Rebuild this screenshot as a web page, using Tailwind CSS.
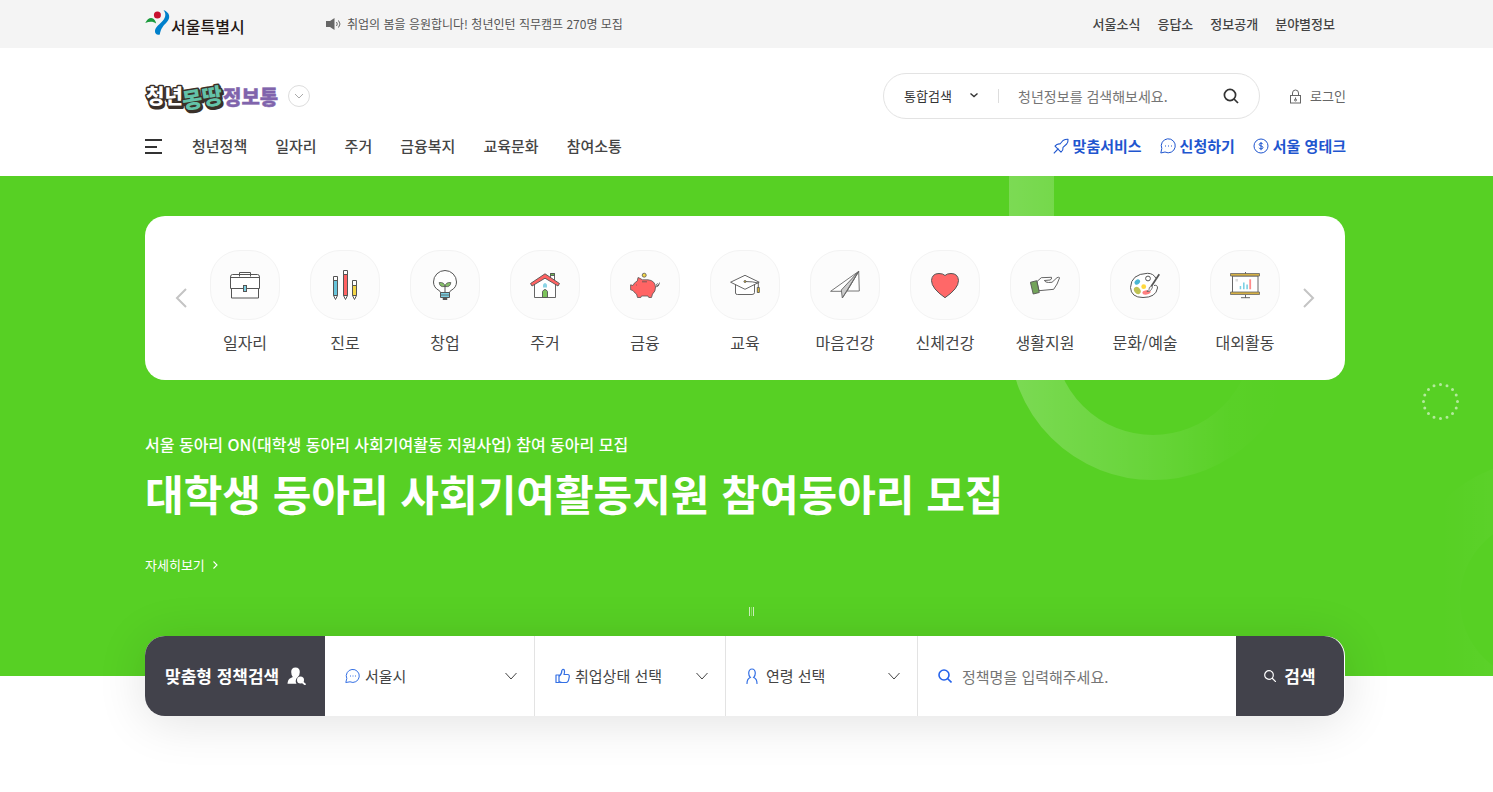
<!DOCTYPE html>
<html lang="ko">
<head>
    <meta charset="UTF-8">
    <meta name="viewport" content="width=device-width, initial-scale=1.0">
    <title>청년몽땅정보통</title>
    <script src="https://cdn.jsdelivr.net/npm/@tailwindcss/browser@4"></script>
</head>
<body class="bg-white font-['Noto_Sans_CJK_KR',sans-serif] text-[#444]">

    <!-- Top bar -->
    <div class="bg-[#f4f4f4]">
        <div class="mx-auto flex h-12 max-w-[1203px] items-center pr-[13px]">
            <a href="#" class="flex w-[180px] items-start text-[16px] font-medium text-[#231815]">
                <svg class="h-[27px] w-[26px]" viewBox="0 0 26 27" aria-hidden="true">
                    <path d="M0.300 13C2.500 8 7 6 9.800 10.200C10.700 11.500 11 12.500 11.100 13.500C8.300 11.300 4.600 11.300 0.300 13Z" fill="#1a9a3c"/>
                    <circle cx="12.400" cy="5" r="3.500" fill="#c8102e"/>
                    <path d="M18.500 0C25 2.500 26 8 21.500 12.500C18.500 15.500 15.800 18.500 14.800 24.500C12 25.500 9.500 23.500 10 20.500C10.800 16.500 15 14 18 10.500C21 7 21 3 18.500 0Z" fill="#0080cb"/>
                </svg>
                <span class="pt-1">서울특별시</span>
            </a>
            <a href="#" class="flex items-center gap-1 text-[12px] text-[#555]">
                <svg class="h-4 w-[18px]" viewBox="0 0 18 16" fill="none" aria-hidden="true">
                    <path d="M1 5h4l4.500-3v12L5 11H1Z" fill="#666"/>
                    <path d="M11.500 6q1.600 2 0 4M13.500 4.500q3 3.500 0 7" stroke="#666"/>
                </svg>
                취업의 봄을 응원합니다! 청년인턴 직무캠프 270명 모집
            </a>
            <nav class="ml-auto flex gap-[17px] text-[13px] font-medium" aria-label="서울시 바로가기">
                <a href="#">서울소식</a>
                <a href="#">응답소</a>
                <a href="#">정보공개</a>
                <a href="#">분야별정보</a>
            </nav>
        </div>
    </div>

    <!-- Header -->
    <header class="mx-auto max-w-[1203px] pt-[25px] pr-[2px] pb-[18px]">
        <div class="flex h-[46px] items-center">
            <a href="#" aria-label="청년몽땅정보통">
                <svg class="h-9 w-[135px] overflow-visible font-black" viewBox="0 0 135 36" stroke-linejoin="round">
                    <g font-size="20" fill="#fff" stroke="#3a3029" stroke-width="3" paint-order="stroke">
                        <text x="2" y="28" fill="#3a3029">청년</text>
                        <text x="1" y="26">청년</text>
                    </g>
                    <g font-size="22" fill="#63c2a8" stroke="#3a3029" stroke-width="3" paint-order="stroke" transform="rotate(-9 58 20)">
                        <text x="38" y="30" fill="#3a3029">몽땅</text>
                        <text x="37" y="28">몽땅</text>
                    </g>
                    <text x="78" y="27" font-size="20" fill="#8064ac" stroke="#8064ac" stroke-width=".4">정보통</text>
                </svg>
            </a>
            <button type="button" aria-label="관련 사이트 열기" class="ml-2 flex size-[22px] items-center justify-center rounded-full border border-[#ddd]">
                <svg class="size-3" viewBox="0 0 12 12" fill="none" stroke="#aaa" aria-hidden="true"><path d="M2 4l4 4 4-4"/></svg>
            </button>

            <form class="ml-auto flex h-[46px] w-[377px] items-center rounded-full border border-[#e3e3e3] pl-5">
                <div class="relative w-[94px]">
                    <select aria-label="검색 범위" class="block h-6 w-full appearance-none text-[13px] leading-6 text-[#333]">
                        <option>통합검색</option>
                    </select>
                    <svg class="pointer-events-none absolute top-[6px] right-[19px] size-[10px]" viewBox="0 0 10 10" fill="none" stroke="#333" stroke-width="1.400" aria-hidden="true"><path d="M1.500 3.500l3.500 3 3.500-3"/></svg>
                </div>
                <span class="h-[14px] w-px bg-[#ddd]"></span>
                <input aria-label="검색어" type="text" placeholder="청년정보를 검색해보세요." class="min-w-0 flex-1 pl-[19px] text-[14px] outline-none placeholder:text-[#757575]">
                <button type="submit" aria-label="검색" class="mr-5">
                    <svg class="size-4" viewBox="0 0 16 16" fill="none" stroke="#333" stroke-width="1.700" aria-hidden="true"><circle cx="7" cy="7" r="5.600"/><path d="M11 11l4 4"/></svg>
                </button>
            </form>
            <a href="#" class="ml-[29px] flex items-center gap-2 text-[13px] text-[#666]">
                <svg class="h-[15px] w-[13px]" viewBox="0 0 13 15" fill="none" stroke="#666" aria-hidden="true">
                    <rect x="1.500" y="6.500" width="10" height="7.500"/>
                    <path d="M3.500 6.500V4a3 3 0 0 1 6 0v2.500M6.500 8.500v2"/><circle cx="6.500" cy="11" r="1"/>
                </svg>
                로그인
            </a>
        </div>

        <div class="mt-[15px] flex h-6 items-center text-[15px] font-medium">
            <button type="button" aria-label="전체 메뉴" class="mr-[30px]">
                <svg class="h-[15px] w-[17px]" viewBox="0 0 17 15" stroke="#333" stroke-width="2" aria-hidden="true"><path d="M0 1h17M0 8h12M0 14h17"/></svg>
            </button>
            <nav class="flex gap-7" aria-label="주 메뉴">
                <a href="#">청년정책</a>
                <a href="#">일자리</a>
                <a href="#">주거</a>
                <a href="#">금융복지</a>
                <a href="#">교육문화</a>
                <a href="#">참여소통</a>
            </nav>
            <nav class="ml-auto flex gap-[18px] font-bold text-[#1f56cf]" aria-label="서비스">
                <a href="#" class="flex items-center gap-1">
                    <svg class="size-4" viewBox="0 0 16 16" fill="none" stroke="currentColor" stroke-width="1.100" stroke-linejoin="round" aria-hidden="true">
                        <path d="M.8 15.300L5.500 10.500M2 8.200Q4 5.500 7 6L10 2.500Q12.500 1 15 1.200Q15.300 3.800 13.700 6L10 9.300Q10.500 12 8 14.200Z"/>
                    </svg>
                    맞춤서비스
                </a>
                <a href="#" class="flex items-center gap-1">
                    <svg class="size-4" viewBox="0 0 16 16" fill="none" stroke="currentColor" aria-hidden="true">
                        <path d="M.8 15l1-4.500A7 7 0 1 1 5 14Z"/><path d="M5 8h1M8 8h1M11 8h1" stroke-width="1.200"/>
                    </svg>
                    신청하기
                </a>
                <a href="#" class="flex items-center gap-1">
                    <svg class="size-4" viewBox="0 0 16 16" fill="none" stroke="currentColor" aria-hidden="true">
                        <circle cx="8" cy="8" r="7"/><path d="M10 6.200Q9.500 5.200 8 5.200Q6.200 5.200 6.200 6.500Q6.200 7.700 8 8Q10 8.300 10 9.600Q10 10.900 8 10.900Q6.500 10.900 6 9.800M8 4v8.200"/>
                    </svg>
                    서울 영테크
                </a>
            </nav>
        </div>
    </header>

    <!-- Hero -->
    <main class="pb-20">
        <section class="relative bg-[#57d024] pt-10 pb-[59px]">
            <svg class="absolute top-0 right-0 h-[500px] w-[493px]" viewBox="0 0 493 500" fill="none" aria-hidden="true">
                <defs>
                    <linearGradient id="ring" gradientUnits="userSpaceOnUse" x1="9" y1="0" x2="285" y2="0">
                        <stop stop-color="#fff" stop-opacity=".22"/>
                        <stop offset=".5" stop-color="#fff" stop-opacity=".1"/>
                        <stop offset=".8" stop-color="#fff" stop-opacity=".015"/>
                        <stop offset="1" stop-color="#fff" stop-opacity="0"/>
                    </linearGradient>
                    <linearGradient id="edge" gradientUnits="userSpaceOnUse" x1="440" y1="0" x2="493" y2="0">
                        <stop stop-color="#fff" stop-opacity="0"/><stop offset="1" stop-color="#fff" stop-opacity=".025"/>
                    </linearGradient>
                </defs>
                <path d="M31.500 0V160A121.500 121.500 0 0 0 274.500 160" stroke="url(#ring)" stroke-width="45"/>
                <circle cx="542" cy="424" r="111" stroke="url(#edge)" stroke-width="58"/>
                <circle cx="440.500" cy="225.500" r="17" stroke="#fff" stroke-opacity=".55" stroke-width="3" stroke-linecap="round" pathLength="16" stroke-dasharray="0 1"/>
            </svg>

            <div class="relative mx-auto max-w-[1203px] pr-[3px]">
                <div class="flex items-center rounded-[20px] bg-white">
                    <button type="button" aria-label="이전" class="flex w-[50px] justify-end pr-2">
                        <svg class="h-5 w-3" viewBox="0 0 12 20" fill="none" stroke="#c4c4c4" stroke-width="2" aria-hidden="true"><path d="M11 1L2 10l9 9"/></svg>
                    </button>
                    <ul class="flex flex-1 justify-between pt-[34px] pb-[26px] text-[16px] leading-6 text-[#444]">
                        <li class="w-[100px]"><a href="#" class="flex flex-col items-center gap-[10px]">
                            <span class="flex size-[70px] items-center justify-center rounded-[30px] border border-[#f3f3f3] bg-[#fcfcfc]">
                                <svg class="size-[30px]" viewBox="0 0 30 30" fill="#fff" stroke="#555" aria-hidden="true">
                                    <path d="M9.500 6.500v-4h11v4M.500 18.500V7q0-2.500 2-2.500h25q2 0 2 2.500v11.500ZM1.500 18.500v9.500h27v-9.500M.500 7.500h29"/>
                                    <rect x="13.500" y="15.500" width="3" height="6" fill="#7ccfe2"/>
                                </svg>
                            </span>일자리</a></li>
                        <li class="w-[100px]"><a href="#" class="flex flex-col items-center gap-[10px]">
                            <span class="flex size-[70px] items-center justify-center rounded-[30px] border border-[#f3f3f3] bg-[#fcfcfc]">
                                <svg class="size-[30px]" viewBox="0 0 30 30" fill="#fff" stroke="#555" aria-hidden="true">
                                    <path d="M3.500 6.500h4v19l-2 4-2-4ZM13.500.500h4v25l-2 4-2-4ZM22.500 10.500h4v15l-2 4-2-4Z"/>
                                    <path d="M3.500 10.500h4v15h-4Z" fill="#67c4da"/>
                                    <path d="M13.500 4.500h4v21h-4Z" fill="#ff6262"/>
                                    <path d="M22.500 15.500h4v10h-4Z" fill="#f3d646"/>
                                </svg>
                            </span>진로</a></li>
                        <li class="w-[100px]"><a href="#" class="flex flex-col items-center gap-[10px]">
                            <span class="flex size-[70px] items-center justify-center rounded-[30px] border border-[#f3f3f3] bg-[#fcfcfc]">
                                <svg class="size-[30px]" viewBox="0 0 30 30" fill="#fff" stroke="#555" aria-hidden="true">
                                    <path d="M10.500 22.500Q10.500 21.500 9 20.500Q3.500 17.500 3.500 12a11.500 11.500 0 0 1 23 0Q26.500 17.500 21 20.500Q19.500 21.500 19.500 22.500Z"/>
                                    <path d="M15 22v-6"/>
                                    <path d="M15 16.500Q9.500 17.500 9.200 12.500Q14.500 12 15 16.500Q15.500 12 20.800 12.500Q20.500 17.500 15 16.500Z" fill="#86bf6a" stroke-width=".8"/>
                                    <path d="M13 28.500h4v1h-4Z"/><path d="M10.500 22.500h9v5h-9Z" fill="#7ccfe2"/><path d="M10.500 25h9" stroke-width=".8"/>
                                </svg>
                            </span>창업</a></li>
                        <li class="w-[100px]"><a href="#" class="flex flex-col items-center gap-[10px]">
                            <span class="flex size-[70px] items-center justify-center rounded-[30px] border border-[#f3f3f3] bg-[#fcfcfc]">
                                <svg class="size-[30px]" viewBox="0 0 30 30" fill="#fff" stroke="#555" stroke-width=".9" aria-hidden="true">
                                    <path d="M20.500 3.500h4v8h-4Z"/><path d="M20.500 3.500h4v2h-4Z" fill="#6db954"/>
                                    <path d="M4.500 13L15 6l10.500 7v14.500h-21Z"/>
                                    <path d="M15 3.800L29.500 13.500L28 16L15 8.200L2 16L.500 13.500Z" fill="#ff6262"/>
                                    <path d="M13 17.500v-3q2-3 4 0v3Z" fill="#8bd5e6" stroke="none"/>
                                    <path d="M12.500 27.500v-6q2.500-4 5 0v6Z" fill="#7cc35b"/>
                                </svg>
                            </span>주거</a></li>
                        <li class="w-[100px]"><a href="#" class="flex flex-col items-center gap-[10px]">
                            <span class="flex size-[70px] items-center justify-center rounded-[30px] border border-[#f3f3f3] bg-[#fcfcfc]">
                                <svg class="size-[30px]" viewBox="0 0 30 30" fill="none" stroke="#555" stroke-width=".8" stroke-linejoin="round" aria-hidden="true">
                                    <circle cx="14.200" cy="5.200" r="2" fill="#f3d646"/>
                                    <path d="M8 7.500L7.300 11Q4 12.500 3 15.500L.600 14.800V19.800L3 20.500Q4.500 23 6.500 24L7.500 27.500H10.800L11.500 26H18L18.800 27.500H21.500L22.500 24Q25.700 21.500 25.500 17Q25 10.500 18 9.800H12.500Q9.500 8 8 7.500Z" fill="#ff6464"/>
                                    <path d="M12 11.800h5M6 15h.8"/>
                                    <path d="M25.500 17Q29 16.500 28.500 14.500Q27.500 13 26.500 14.300Q26.200 16.800 28.500 15.500L29.700 12.500"/>
                                </svg>
                            </span>금융</a></li>
                        <li class="w-[100px]"><a href="#" class="flex flex-col items-center gap-[10px]">
                            <span class="flex size-[70px] items-center justify-center rounded-[30px] border border-[#f3f3f3] bg-[#fcfcfc]">
                                <svg class="size-[30px]" viewBox="0 0 30 30" fill="#fff" stroke="#555" stroke-width=".9" aria-hidden="true">
                                    <path d="M5.500 14v9q0 1.500 2 1.500h14.500q2.500 0 2.500-2V14"/>
                                    <path d="M15 5.300L29.200 12.200L15 19.300L.600 12.200Z"/>
                                    <path d="M15 11.500Q23 11.500 28.300 13v5" fill="none"/>
                                    <circle cx="15" cy="11.500" r="1" fill="#f3c832"/><path d="M27.300 17.500h2v5h-2Z" fill="#f3c832"/>
                                </svg>
                            </span>교육</a></li>
                        <li class="w-[100px]"><a href="#" class="flex flex-col items-center gap-[10px]">
                            <span class="flex size-[70px] items-center justify-center rounded-[30px] border border-[#f3f3f3] bg-[#fcfcfc]">
                                <svg class="size-[30px]" viewBox="0 0 30 30" fill="#fff" stroke="#666" stroke-width=".9" stroke-linejoin="round" aria-hidden="true">
                                    <path d="M28.700 1.300L.600 21.300H11.500ZM28.700 1.300L29.300 21H17Z"/>
                                    <path d="M28.700 1.300L11.300 20L12.300 28L17 21Z" fill="#ccc"/><path d="M28.700 1.300L12.300 28"/>
                                </svg>
                            </span>마음건강</a></li>
                        <li class="w-[100px]"><a href="#" class="flex flex-col items-center gap-[10px]">
                            <span class="flex size-[70px] items-center justify-center rounded-[30px] border border-[#f3f3f3] bg-[#fcfcfc]">
                                <svg class="size-[30px]" viewBox="0 0 30 30" aria-hidden="true">
                                    <path d="M15 27.700Q1.500 18.500 1.500 10.500Q2 3.500 9 3.500Q13 3.500 15 5.500Q17 3.500 21 3.500Q28 3.500 28.500 10.500Q28.500 18.500 15 27.700Z" fill="#ff6868" stroke="#555"/>
                                </svg>
                            </span>신체건강</a></li>
                        <li class="w-[100px]"><a href="#" class="flex flex-col items-center gap-[10px]">
                            <span class="flex size-[70px] items-center justify-center rounded-[30px] border border-[#f3f3f3] bg-[#fcfcfc]">
                                <svg class="size-[30px]" viewBox="0 0 30 30" fill="#fff" stroke="#555" stroke-width=".9" stroke-linejoin="round" aria-hidden="true">
                                    <path d="M7 11.500L11.300 7.700L21.500 7.300Q22 9.500 20 10L14.300 10.500Q15.500 12.500 18.500 12.500L22 12.300L27 7.700Q28.500 6.800 29.600 7.700Q27.500 14.500 23.700 19.300L9 20.700Z"/>
                                    <path d="M.400 12.300L6.700 10.700L9.300 22.500L3.200 24Z" fill="#73a35a"/>
                                </svg>
                            </span>생활지원</a></li>
                        <li class="w-[100px]"><a href="#" class="flex flex-col items-center gap-[10px]">
                            <span class="flex size-[70px] items-center justify-center rounded-[30px] border border-[#f3f3f3] bg-[#fcfcfc]">
                                <svg class="size-[30px]" viewBox="0 0 30 30" aria-hidden="true">
                                    <path d="M26 8.500Q23.500 3.300 17.500 3.300Q1 4 .500 17.500Q1 27.500 13 27.500Q26 27.500 27.500 18Q27.500 14.500 24 15.500" fill="#fff" stroke="#555"/>
                                    <circle cx="18" cy="8.500" r="2.400" fill="#fff" stroke="#555"/>
                                    <ellipse cx="7.300" cy="12" rx="3" ry="2.300" fill="#49b6d3" transform="rotate(-40 7.300 12)"/>
                                    <circle cx="13.700" cy="16.700" r="2.400" fill="#ffd83d"/>
                                    <ellipse cx="7.300" cy="20.500" rx="3" ry="4" fill="#bfc253" transform="rotate(-35 7.300 20.500)"/>
                                    <ellipse cx="16.500" cy="22.300" rx="4.200" ry="2.200" fill="#ff8080" transform="rotate(-10 16.500 22.300)"/>
                                    <path d="M29.300 4.300L21 16.800" stroke="#555" stroke-width="1.800"/>
                                    <path d="M21.800 16Q18.500 17 19 19.500L17 21.500Q21 22 22.500 17Z" fill="#fff" stroke="#555" stroke-width=".8"/>
                                </svg>
                            </span>문화/예술</a></li>
                        <li class="w-[100px]"><a href="#" class="flex flex-col items-center gap-[10px]">
                            <span class="flex size-[70px] items-center justify-center rounded-[30px] border border-[#f3f3f3] bg-[#fcfcfc]">
                                <svg class="size-[30px]" viewBox="0 0 30 30" fill="#fff" stroke="#666" aria-hidden="true">
                                    <path d="M15.500 2v2M15.500 25v3M11 27.700h9"/>
                                    <path d="M2.500 6h25.500v16.500h-25.500Z"/>
                                    <path d="M.500 3.500h29v2.500h-29ZM.500 22h29v2.500h-29Z" fill="#d5b045" stroke-width=".8"/>
                                    <g stroke="none">
                                        <path d="M5.500 9h2.500v2.500h-2.500Z" fill="#ddd"/>
                                        <path d="M9.700 16h1.500v3.300h-1.500ZM13 12.500h1.600v6.800h-1.600ZM16.300 14.500h1.600v4.800h-1.600Z" fill="#7cd0e4"/>
                                        <path d="M19.300 9.300h1.800v10h-1.800Z" fill="#ff8b8b"/>
                                    </g>
                                </svg>
                            </span>대외활동</a></li>
                    </ul>
                    <button type="button" aria-label="다음" class="flex w-[50px] pl-2">
                        <svg class="h-5 w-3" viewBox="0 0 12 20" fill="none" stroke="#c4c4c4" stroke-width="2" aria-hidden="true"><path d="M1 1l9 9-9 9"/></svg>
                    </button>
                </div>

                <div class="mt-[52px] text-white">
                    <p class="text-[16px] leading-6 font-medium">서울 동아리 ON(대학생 동아리 사회기여활동 지원사업) 참여 동아리 모집</p>
                    <h1 class="mt-[7px] text-[42px] leading-[60px] font-bold">대학생 동아리 사회기여활동지원 참여동아리 모집</h1>
                    <a href="#" class="mt-8 flex items-center gap-2 text-[13px] leading-5">
                        자세히보기
                        <svg class="h-2 w-[5px]" viewBox="0 0 5 8" fill="none" stroke="currentColor" stroke-width="1.100" aria-hidden="true"><path d="M.5.500L4 4 .5 7.500"/></svg>
                    </a>
                </div>
                <div class="mt-8 flex justify-center pl-[13px]">
                    <button type="button" aria-label="슬라이드 정지" class="flex h-[10px] gap-px">
                        <span class="h-[9px] w-px bg-white/70"></span>
                        <span class="h-[9px] w-px bg-white/30"></span>
                        <span class="h-[9px] w-px bg-white/70"></span>
                    </button>
                </div>
            </div>
        </section>

        <!-- Policy search -->
        <div class="relative mx-auto -mt-10 max-w-[1203px] pr-[3px]">
            <form class="flex h-20 rounded-[20px] bg-white pr-px text-[15px] text-[#444] shadow-[0_5px_50px_rgba(0,0,0,0.12)]">
                <h2 class="flex w-[180px] items-center gap-2 rounded-l-[20px] bg-[#42424b] pl-5 text-[17px] font-bold text-white">
                    맞춤형 정책검색
                    <svg class="h-[18px] w-[19px] shrink-0" viewBox="0 0 19 18" fill="#fff" aria-hidden="true">
                        <path d="M8.500.500q4.300 0 4.300 4.500 0 3-1.800 4.700Q8.700 11.500 8.700 14q0 1.500.8 2.800H.500Q.700 12.500 3.300 11.200L5.800 10Q4.200 8 4.200 5 4.200.500 8.500.500Z"/>
                        <circle cx="13.500" cy="13" r="3.500"/><path d="M15.500 15.300l3 2.500" stroke="#fff" stroke-width="1.800"/>
                    </svg>
                </h2>
                <div class="relative w-[210px] border-r border-[#e3e3e3]">
                    <label for="city" aria-label="지역" class="absolute top-8 left-5">
                        <svg class="size-4" viewBox="0 0 16 16" fill="none" stroke="#3470e4" aria-hidden="true">
                            <path d="M.8 14.500l1-4A6.500 6.500 0 1 1 5 13.800Z"/><path d="M5 8h1M7.500 8h1M10 8h1"/>
                        </svg>
                    </label>
                    <select id="city" class="size-full appearance-none pl-10"><option>서울시</option></select>
                    <svg class="pointer-events-none absolute top-[36px] right-[17px] h-2 w-3" viewBox="0 0 12 8" fill="none" stroke="#444" aria-hidden="true"><path d="M.500 1L6 7l5.500-6"/></svg>
                </div>
                <div class="relative w-[191px] border-r border-[#e3e3e3]">
                    <label for="job" aria-label="취업상태" class="absolute top-8 left-5">
                        <svg class="size-4" viewBox="0 0 16 16" fill="none" stroke="#3470e4" stroke-width="1.200" stroke-linejoin="round" aria-hidden="true">
                            <path d="M1 7h3v7.500H1ZM4 8.500Q7 6 6.800 2.500Q8 .500 9.300 2Q10 4 9 6.500h4Q15 7 14 10Q13.500 14 11.500 14.500H7Q5 14.500 4 13.500"/>
                        </svg>
                    </label>
                    <select id="job" class="size-full appearance-none pl-10"><option>취업상태 선택</option></select>
                    <svg class="pointer-events-none absolute top-[36px] right-[17px] h-2 w-3" viewBox="0 0 12 8" fill="none" stroke="#444" aria-hidden="true"><path d="M.500 1L6 7l5.500-6"/></svg>
                </div>
                <div class="relative w-[192px] border-r border-[#e3e3e3]">
                    <label for="age" aria-label="연령" class="absolute top-8 left-[18px]">
                        <svg class="size-4" viewBox="0 0 16 16" fill="none" stroke="#3470e4" stroke-width="1.200" stroke-linecap="round" aria-hidden="true">
                            <path d="M3 15.500Q3 10.800 6.300 9.500Q4.700 8 4.700 5Q5 1 8 1Q11 1 11.300 5Q11.300 8 9.700 9.500Q13 10.800 13 15.500"/>
                        </svg>
                    </label>
                    <select id="age" class="size-full appearance-none pl-10"><option>연령 선택</option></select>
                    <svg class="pointer-events-none absolute top-[36px] right-[17px] h-2 w-3" viewBox="0 0 12 8" fill="none" stroke="#444" aria-hidden="true"><path d="M.500 1L6 7l5.500-6"/></svg>
                </div>
                <div class="flex min-w-0 flex-1 items-center gap-[10px] pl-5">
                    <label for="policy" aria-label="정책명">
                        <svg class="size-[14px]" viewBox="0 0 14 14" fill="none" stroke="#2563eb" stroke-width="1.600" aria-hidden="true"><circle cx="6" cy="6" r="5"/><path d="M9.500 9.500l4 4"/></svg>
                    </label>
                    <input id="policy" type="text" placeholder="정책명을 입력해주세요." class="h-full min-w-0 flex-1 outline-none placeholder:text-[#757575]">
                </div>
                <button type="submit" class="flex w-[108px] items-center justify-center gap-2 rounded-r-[20px] bg-[#42424b] text-[17px] font-bold text-white">
                    <svg class="size-3" viewBox="0 0 12 12" fill="none" stroke="currentColor" stroke-width="1.200" aria-hidden="true"><circle cx="5" cy="5" r="4.300"/><path d="M8 8l4 4"/></svg>
                    검색
                </button>
            </form>
        </div>
    </main>

</body>
</html>
